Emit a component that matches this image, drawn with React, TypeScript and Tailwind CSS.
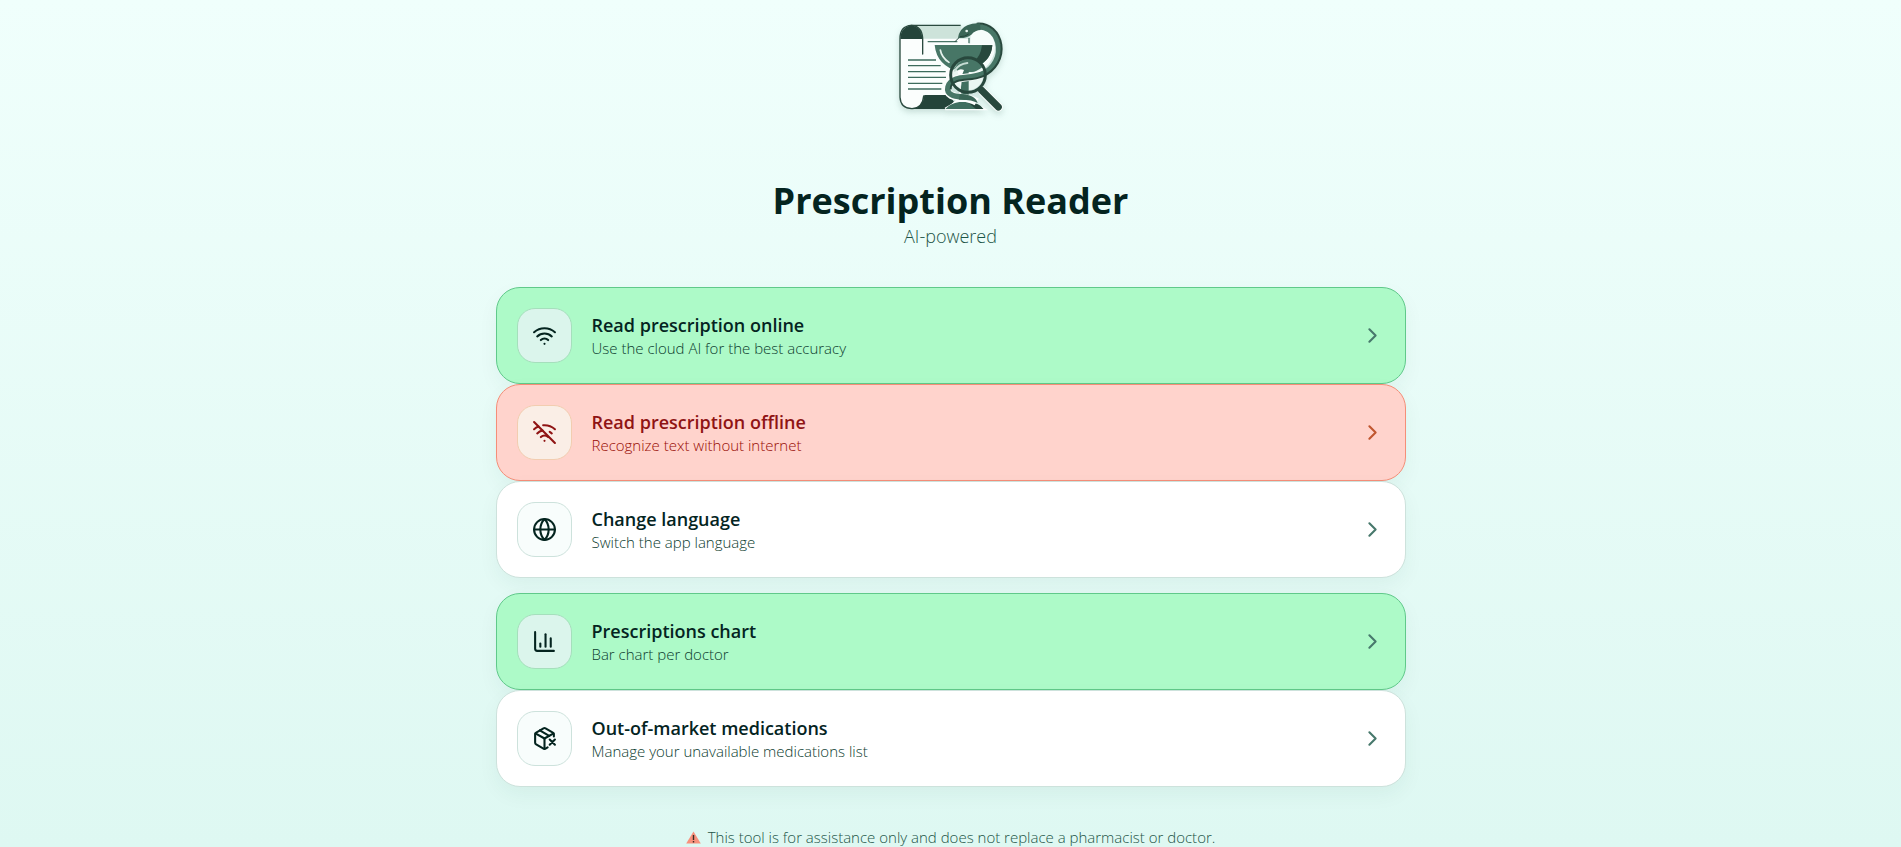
import { ChevronRight, ChartColumn, Globe, PackageX, Wifi, WifiOff } from "lucide-react";
import type { LucideIcon } from "lucide-react";
import clsx from "clsx";

type Tone = "green" | "red" | "plain";

type Action = {
  title: string;
  subtitle: string;
  icon: LucideIcon;
  tone: Tone;
};

const scanActions: Action[] = [
  {
    title: "Read prescription online",
    subtitle: "Use the cloud AI for the best accuracy",
    icon: Wifi,
    tone: "green",
  },
  {
    title: "Read prescription offline",
    subtitle: "Recognize text without internet",
    icon: WifiOff,
    tone: "red",
  },
  {
    title: "Change language",
    subtitle: "Switch the app language",
    icon: Globe,
    tone: "plain",
  },
];

const dataActions: Action[] = [
  {
    title: "Prescriptions chart",
    subtitle: "Bar chart per doctor",
    icon: ChartColumn,
    tone: "green",
  },
  {
    title: "Out-of-market medications",
    subtitle: "Manage your unavailable medications list",
    icon: PackageX,
    tone: "plain",
  },
];

const tones: Record<Tone, { card: string; box: string; title: string; subtitle: string; chevron: string }> = {
  green: {
    card: "bg-[#adfac8] border-[#60c98a]",
    box: "bg-[#dbf5ec] border-[#a5dfbc] text-[#04241f]",
    title: "text-[#04241f]",
    subtitle: "text-[#0c3c2f]",
    chevron: "text-[#47786c]",
  },
  red: {
    card: "bg-[#ffd3cc] border-[#f58e78]",
    box: "bg-[#faeee6] border-[#f2cdb0] text-[#8f1414]",
    title: "text-[#8f1414]",
    subtitle: "text-[#980c04]",
    chevron: "text-[#c0562f]",
  },
  plain: {
    card: "bg-white border-[#cde2dc]",
    box: "bg-[#f8fdfc] border-[#cde2dc] text-[#04241f]",
    title: "text-[#04241f]",
    subtitle: "text-[#0c3c2f]",
    chevron: "text-[#47786c]",
  },
};

function Logo() {
  return (
    <svg
      viewBox="3 0 420 345"
      className="h-[115px] w-[140px] drop-shadow-[0_3px_3px_rgba(20,70,55,0.18)]"
      role="img"
      aria-label="Prescription Reader logo"
    >
      {/* parchment */}
      <path d="M92 47 H245 L234 86 H128 V90 Z" fill="#cde3da" />
      <path d="M92 46 H242" stroke="#2a4a3f" strokeWidth="4" fill="none" />
      <path d="M60 86 H128 V132 L200 132 V257 H140 Q130 260 130 272 Q128 296 95 297 Q60 294 60 262Z" fill="#fbfefd" />
      <path d="M128 86 H268 V230 H128Z" fill="#fbfefd" />
      <path
        d="M128 132 V84 Q126 48 94 46 Q60 48 60 86 V262 Q62 296 96 296 Q128 294 131 258"
        fill="none"
        stroke="#2a4a3f"
        strokeWidth="4"
        strokeLinecap="round"
      />
      <path d="M61 87 Q62 49 94 47 Q125 49 127 87Z" fill="#24443a" />
      <path d="M133 255 H208 L222 276 L196 297 H100 Q130 290 133 255Z" fill="#24443a" />
      <path d="M143 95 H232 M267 84 V100" stroke="#4a7567" strokeWidth="4" />
      <path
        d="M84 150 H168 M84 167 H182 M84 185 H197 M84 202 H198 M84 220 H187 M84 237 H184"
        stroke="#3d6b5c"
        strokeWidth="4"
      />
      {/* space enclosed by the snake's loop */}
      <path d="M272 68 Q310 48 332 72 Q350 96 343 130 Q330 170 300 184 L270 110Z" fill="#f6fdfb" />
      {/* goblet */}
      <path
        d="M164 105 H337 Q334 150 292 170 Q270 184 262 198 V250 Q264 270 310 297 H196 Q238 276 242 250 V198 Q236 182 212 172 Q170 152 164 105Z"
        fill="#fbfefd"
        stroke="#fbfefd"
        strokeWidth="8"
      />
      <path d="M164 105 H337 Q334 150 292 170 Q272 182 262 186 H240 Q170 168 164 105Z" fill="#477666" />
      <path d="M306 106 H337 Q334 150 292 168 L280 156 Q302 140 306 106Z" fill="#28483d" />
      <path d="M181 120 Q185 143 207 157" fill="none" stroke="#e4f1ec" strokeWidth="5" strokeLinecap="round" />
      <circle cx="264" cy="195" r="46" fill="#eaf6f2" />
      <path d="M222 176 Q238 146 268 147 Q298 150 307 172 Q288 186 276 186 H240Z" fill="#477666" />
      <path d="M239 180 H266 V256 H244Z" fill="#3f6e5f" />
      <path d="M232 182 Q240 174 252 180 Q246 190 246 206 L242 240 L238 204Z" fill="#fbfefd" />
      <path d="M196 297 Q210 280 238 276 H272 Q300 280 310 297Z" fill="#3f6e5f" />
      <path d="M262 276 Q300 280 310 297 H288Z" fill="#24443a" />
      {/* snake */}
      <path
        d="M315 188 C290 203 262 200 232 206 C198 212 194 246 214 256 C238 267 262 258 290 276"
        fill="none"
        stroke="#fbfefd"
        strokeWidth="23"
      />
      <path
        d="M284 52 C316 44 344 64 353 96 C364 138 342 178 304 193 C276 204 250 199 228 207 C200 217 196 244 214 254 C226 261 244 260 258 262"
        fill="none"
        stroke="#477666"
        strokeWidth="16"
      />
      <path
        d="M290 41 C330 38 358 66 364 104 C370 142 348 182 308 199 C280 211 254 206 232 213 C216 219 211 228 212 238"
        fill="none"
        stroke="#28483d"
        strokeWidth="6"
      />
      <path d="M240 252 Q286 254 293 279 Q276 268 236 269Z" fill="#3b6657" />
      <path d="M234 84 Q238 56 262 46 Q280 38 300 40 L302 60 Q286 60 274 74 Q258 86 234 84Z" fill="#3b6657" />
      <path d="M236 84 L224 96" stroke="#28483d" strokeWidth="3" />
      <path d="M240 80 Q256 80 266 72" fill="none" stroke="#24443a" strokeWidth="3" />
      <circle cx="260" cy="63" r="4" fill="#e8f5f0" />
      {/* magnifier */}
      <circle cx="264" cy="195" r="52" fill="none" stroke="#28483d" strokeWidth="9" />
      <path d="M224 182 Q236 162 262 159" fill="none" stroke="#c6ddd4" strokeWidth="6" strokeLinecap="round" />
      <path d="M308 244 L355 291" stroke="#fbfefd" strokeWidth="27" strokeLinecap="round" />
      <path d="M304 240 L355 291" stroke="#28483d" strokeWidth="21" strokeLinecap="round" />
    </svg>
  );
}

function ActionCard({ action }: { action: Action }) {
  const tone = tones[action.tone];
  const Icon = action.icon;

  return (
    <button
      type="button"
      className={clsx(
        "flex w-full items-center gap-5 rounded-3xl border p-5 text-left shadow-[0_8px_20px_rgba(16,80,60,0.05)]",
        tone.card
      )}
    >
      <span className={clsx("flex size-[55px] shrink-0 items-center justify-center rounded-[18px] border", tone.box)}>
        <Icon size={25} />
      </span>
      <span className="flex flex-1 flex-col">
        <span className={clsx("text-lg leading-6 font-semibold", tone.title)}>{action.title}</span>
        <span className={clsx("text-[15px] leading-[22px] font-light", tone.subtitle)}>{action.subtitle}</span>
      </span>
      <ChevronRight size={25} className={tone.chevron} />
    </button>
  );
}

export default function App() {
  return (
    <div className="h-screen overflow-hidden bg-linear-to-b from-[#f0fffc] to-[#def8f2] font-['Open_Sans','Noto_Sans',sans-serif]">
      <main className="mx-auto flex w-full max-w-[910px] flex-col items-center pt-[10px]">
        <Logo />
        <h1 className="mt-[53px] text-[36px] leading-[46px] font-bold text-[#04241f]">Prescription Reader</h1>
        <p className="text-lg leading-6 font-light text-[#1c5446]">AI-powered</p>
        <div className="mt-[39px] flex w-full flex-col gap-[15px]">
          <section className="flex flex-col">
            {scanActions.map((action) => (
              <ActionCard key={action.title} action={action} />
            ))}
          </section>
          <section className="flex flex-col">
            {dataActions.map((action) => (
              <ActionCard key={action.title} action={action} />
            ))}
          </section>
        </div>
        <footer className="mt-[39px] flex items-center gap-[7px] text-[15px] leading-[22px] font-light text-[#1c5446]">
          <svg viewBox="0 0 15 13" className="h-[13px] w-[15px]" aria-hidden="true">
            <path d="M7.5 0.5 L14.8 12.5 H0.2Z" fill="#f8917c" />
            <path d="M7.5 4 V9 M7.5 10 V11.5" stroke="#3a2a24" strokeWidth="1.4" />
          </svg>
          <p>This tool is for assistance only and does not replace a pharmacist or doctor.</p>
        </footer>
      </main>
    </div>
  );
}
